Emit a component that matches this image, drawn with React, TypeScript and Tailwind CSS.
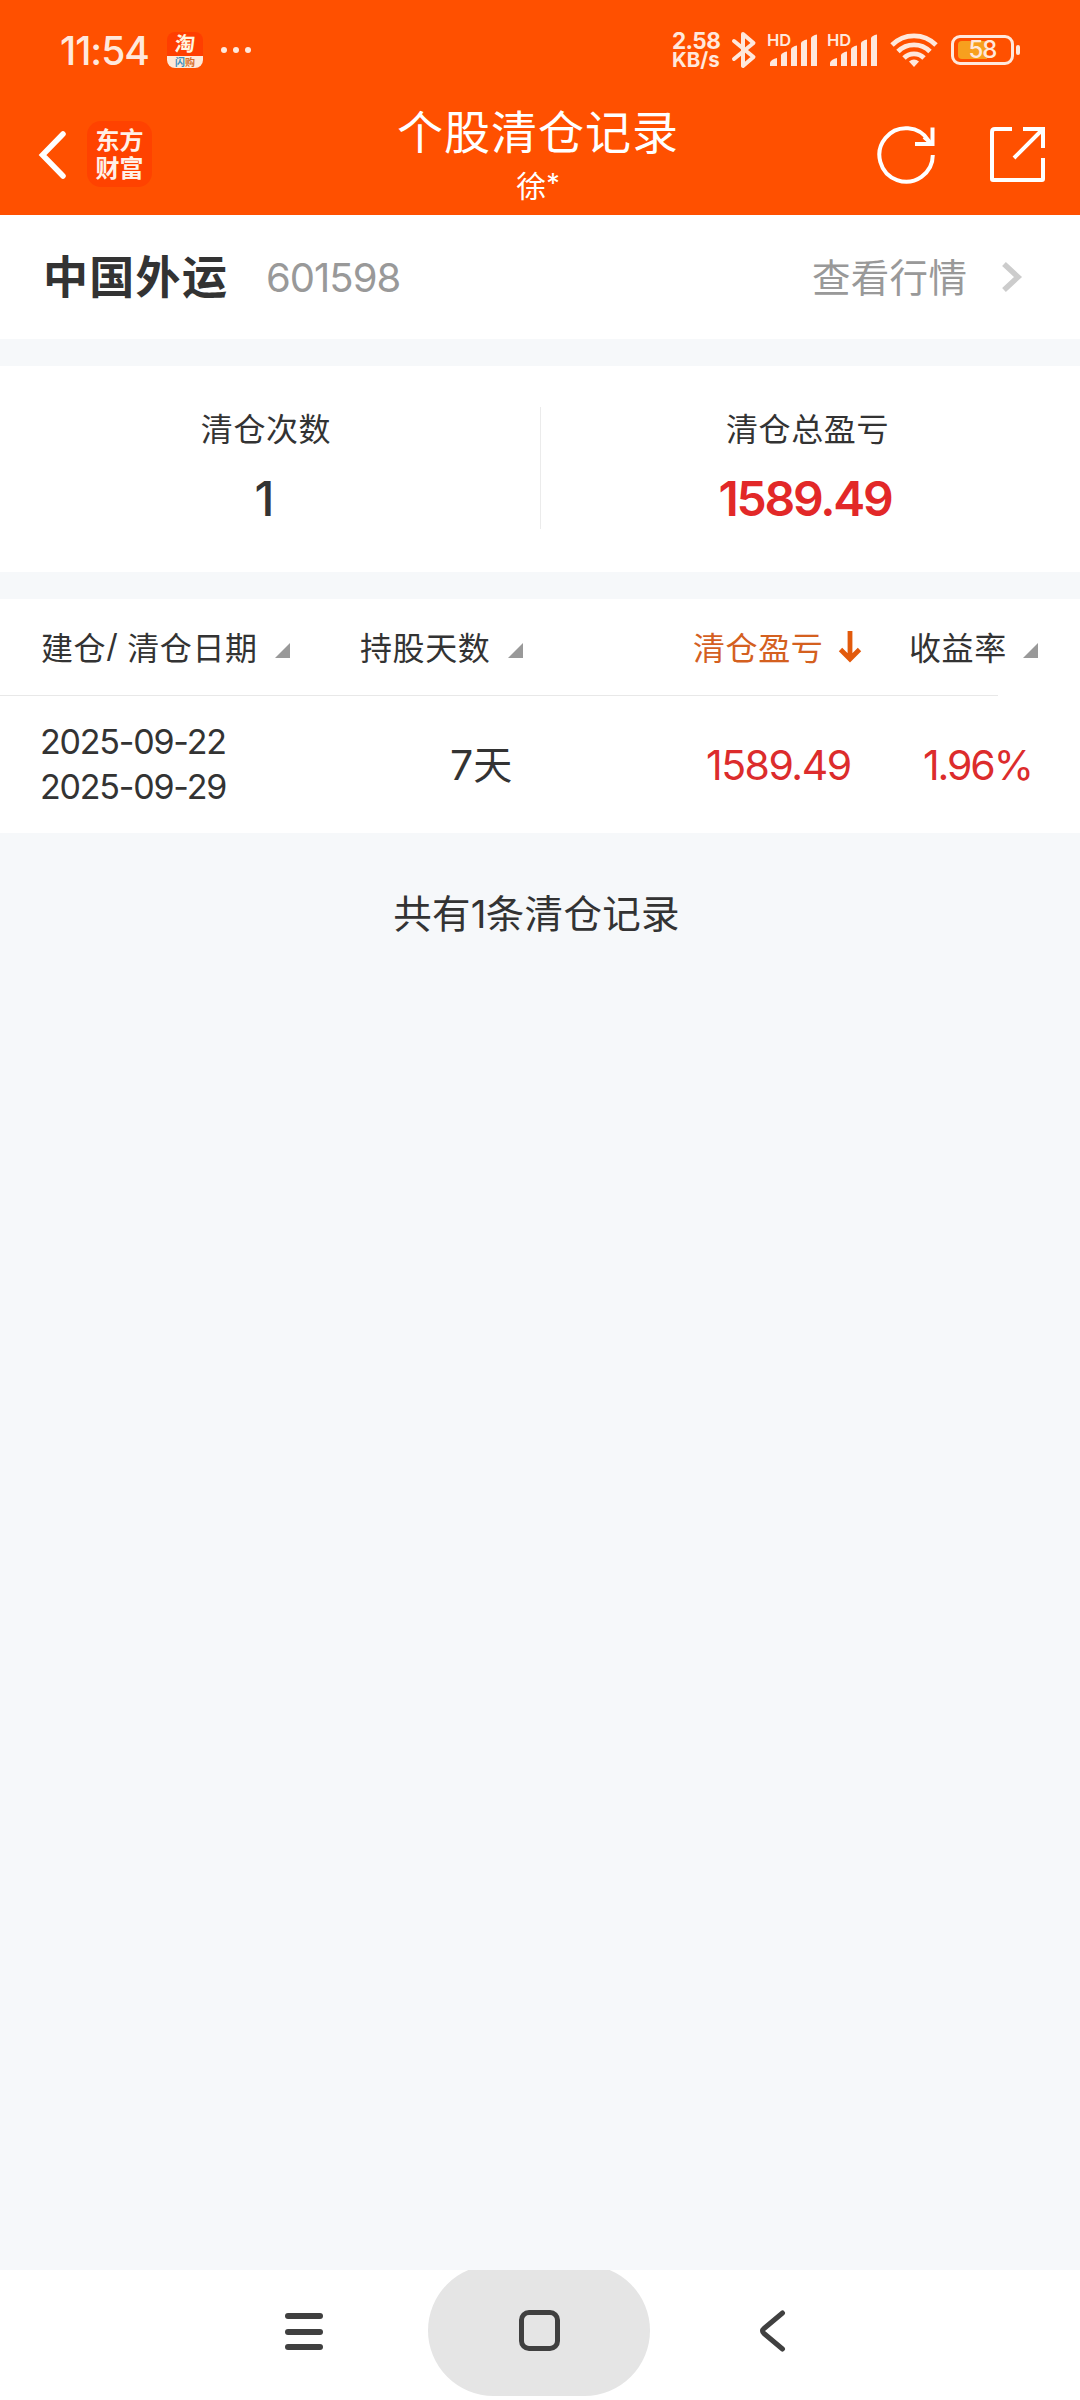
import React from "react";

const CJK = "font-['Noto_Sans_CJK_SC',sans-serif]";
const LATIN = "font-['Inter',sans-serif]";

function Signal() {
  return (
    <svg width="52" height="34" viewBox="0 0 52 34" className="block overflow-visible" fill="#ffe8dc">
      <text x="-1" y="13" fontSize="16.5" fontWeight="600" fontFamily="Inter, sans-serif">HD</text>
      <path d="M2 33v-3.500q1.500-3.500 7-4.500v8z" />
      <path d="M13 33V22q1-2.500 6-3.500V33z" />
      <path d="M23 33V16q1-2.500 6-3.500V33z" />
      <path d="M33 33V10q1-2.500 6-3.500V33z" />
      <path d="M43 33V5q1-2.500 6-3.500V33z" />
    </svg>
  );
}

function StatusBar() {
  return (
    <div className="flex h-[100px] items-center pl-[60px] text-[#ffe8dc]">
      <span className={`${LATIN} w-[107px] whitespace-nowrap text-[39px] leading-none font-medium tracking-[-1px]`}>11:54</span>
      <div className="flex h-9 w-9 flex-col rounded-[8px] bg-[#ff3e00]">
        <div className={`${CJK} flex h-6 items-center justify-center text-[20px] leading-[24px] font-bold text-[#fff6e0]`}>
          <span className="-mt-[2px] -skew-x-6">淘</span>
        </div>
        <div className={`${CJK} flex h-3 justify-center rounded-b-[8px] bg-[#ffe9d8] text-[10px] leading-[11px] font-bold text-[#d8702c]`}>
          <span className="text-[#3c8fc0]">闪</span>
          <span>购</span>
        </div>
      </div>
      <div className="ml-[18px] flex gap-[6px]">
        <i className="h-[6px] w-[6px] rounded-full bg-current" />
        <i className="h-[6px] w-[6px] rounded-full bg-current" />
        <i className="h-[6px] w-[6px] rounded-full bg-current" />
      </div>
      <div className={`${LATIN} ml-[421px] w-[59px] font-bold`}>
        <div className="text-[22.500px] leading-[19px] tracking-[-0.600px]">2.58</div>
        <div className="text-[20.500px] leading-[19px]">KB/s</div>
      </div>
      <svg width="26" height="40" viewBox="0 0 26 40" className="block" fill="none" stroke="#ffe8dc" strokeWidth="4" strokeLinejoin="round" strokeLinecap="round">
        <path d="M3 11 22.500 27 12 36V4l10.500 9L3 29" />
      </svg>
      <div className="ml-[11px] flex gap-2">
        <Signal />
        <Signal />
      </div>
      <svg width="48" height="36" viewBox="0 0 48 36" className="ml-[10px] block" fill="none" stroke="#ffe8dc" strokeWidth="4.800">
        <path d="M2 13a31 31 0 0 1 44 0" />
        <path d="M8 19.500a22.500 22.500 0 0 1 32 0" />
        <path d="M14 26a14 14 0 0 1 20 0" />
        <path d="M24 35l-5-5.500q5-3.800 10 0z" fill="#ffe8dc" stroke="none" />
      </svg>
      <div className="ml-[13px] flex h-[30px] w-[63px] items-center rounded-[9px] border-[3px] border-[#ffe8dc] p-1">
        <div className="relative h-[18px] w-full">
          <div className="h-full w-[29px] rounded-l-[4px] bg-[#f7a01e]" />
          <span className={`${LATIN} absolute inset-0 text-center text-[24px] leading-[18px] font-medium tracking-[-1px]`}>58</span>
        </div>
      </div>
      <div className="ml-[2px] h-[10px] w-[4px] rounded-[2px] bg-[#ffe8dc]" />
    </div>
  );
}

function TitleBar() {
  return (
    <div className={`${CJK} flex h-[115px] text-white`}>
      <div className="flex w-[358px] items-start pl-[38px]">
        <svg width="30" height="50" viewBox="0 0 30 50" className="mt-[30px] block" fill="none" stroke="#fff" strokeWidth="5.500" strokeLinecap="round" strokeLinejoin="miter">
          <path d="M25 4 4.500 25 25 46" />
        </svg>
        <div className="mt-[21px] ml-[19px] flex h-[66px] w-[65px] flex-col items-center rounded-[14px] bg-[#ff4200] pt-[4px] text-[24px] leading-[28px] font-bold text-[#fff0e8]">
          <span className="h-7">东方</span>
          <span className="h-7">财富</span>
        </div>
      </div>
      <div className="flex w-[360px] flex-col items-center">
        <div className="mt-[4px] h-[54px] text-[46px] leading-[50px] tracking-[1px]">个股清仓记录</div>
        <div className="flex h-[52px] text-[30px] leading-[52px]">
          徐<span className={`${LATIN} text-[27px] leading-[52px]`}>*</span>
        </div>
      </div>
      <svg width="60" height="60" viewBox="0 0 60 60" className="mt-[25px] ml-[158px] block" fill="none" stroke="#fff" strokeWidth="4">
        <path d="M56.800 30A26.700 26.700 0 1 1 53 16.200" />
        <path d="M39 19h17.500V2.500" />
        <path d="M48 12l8 7" />
      </svg>
      <svg width="60" height="60" viewBox="0 0 60 60" className="mt-[25px] ml-[52px] block" fill="none" stroke="#fff" strokeWidth="4">
        <path d="M24 4H7q-3 0-3 3v47q0 1 1 1h49q1 0 1-1V33" />
        <path d="M35 4h20v19M54 5 26 33" />
      </svg>
    </div>
  );
}

function SortMark({ className }: { className: string }) {
  return (
    <svg width="15" height="15" viewBox="0 0 15 15" className={`block ${className}`}>
      <path d="M15 0v15H0z" fill="#999" />
    </svg>
  );
}

function StockRow() {
  return (
    <div className="flex h-[124px] items-center pl-[43px]">
      <span className={`${CJK} -mt-[4px] w-[223px] text-[45px] leading-[50px] font-bold tracking-[1.300px]`}>中国外运</span>
      <span className={`${LATIN} mt-[2px] w-[546px] text-[40px] leading-[50px] tracking-[-1px] text-[#999]`}>601598</span>
      <span className={`${CJK} -mt-[5px] w-[189px] text-[38.500px] leading-[50px] tracking-[0.300px] text-[#999]`}>查看行情</span>
      <svg width="22" height="32" viewBox="0 0 22 32" className="block" fill="none" stroke="#ccc" strokeWidth="5.500">
        <path d="M3 3l14 13L3 29" />
      </svg>
    </div>
  );
}

function Stats() {
  return (
    <div className="flex h-[206px] pt-[41px]">
      <div className="flex w-[540px] flex-col items-center pr-[8px]">
        <div className={`${CJK} h-[42px] text-[32px] leading-[40px] tracking-[0.600px]`}>清仓次数</div>
        <div className={`${LATIN} mt-[22px] -ml-[3px] text-[48px] leading-[56px] font-medium`}>1</div>
      </div>
      <div className="h-[122px] w-px bg-[#ebebeb]" />
      <div className="flex w-[533px] flex-col items-center">
        <div className={`${CJK} h-[42px] text-[32px] leading-[40px] tracking-[0.600px]`}>清仓总盈亏</div>
        <div className={`${LATIN} mt-[22px] -ml-[5px] text-[48px] leading-[56px] font-semibold tracking-[-2.200px] text-[#e22828]`}>1589.49</div>
      </div>
    </div>
  );
}

function Records() {
  return (
    <div className="h-[234px]">
      <div className={`${CJK} flex h-[96px] items-center pl-[41px] text-[32px] leading-[42px] whitespace-nowrap`}>
        <span className="-mt-[3px] flex w-[234px] tracking-[0.600px]">
          建仓<span className={`${LATIN} w-[21px]`}>/</span>清仓日期
        </span>
        <SortMark className="mt-[7px]" />
        <span className="-mt-[3px] ml-[70px] w-[148px] tracking-[0.600px]">持股天数</span>
        <SortMark className="mt-[7px]" />
        <span className="-mt-[3px] ml-[170px] w-[145px] tracking-[0.600px] text-[#d4601f]">清仓盈亏</span>
        <svg width="24" height="32" viewBox="0 0 24 32" className="block" fill="none" stroke="#e25a0c" strokeWidth="4.800">
          <path d="M12 0v28M2.500 18.500 12 28l9.500-9.500" />
        </svg>
        <span className="-mt-[3px] ml-[47px] w-[114px] tracking-[0.600px]">收益率</span>
        <SortMark className="mt-[7px]" />
      </div>
      <div className="h-px w-[998px] bg-[#e8e8e8]" />
      <div className={`${LATIN} flex h-[137px] items-center text-[41px]`}>
        <div className="-mt-[2px] w-[450px] pl-[40px] text-[34px] leading-[45px] tracking-[-1.200px]">
          <div>2025-09-22</div>
          <div>2025-09-29</div>
        </div>
        <div className="flex w-[256px] leading-[50px]">
          7<span className={`${CJK} -mt-[3px] text-[39px]`}>天</span>
        </div>
        <div className="w-[217px] leading-[50px] tracking-[-1.500px] text-[#dc2c2c]">1589.49</div>
        <div className="leading-[50px] tracking-[-2.100px] text-[#dc2c2c]">1.96%</div>
      </div>
    </div>
  );
}

function NavBar() {
  return (
    <div className="flex h-[130px] items-start overflow-hidden bg-white">
      <div className="mt-[43px] ml-[285px] flex w-[143px] flex-col gap-[9.500px]">
        <i className="h-[6px] w-[38px] rounded-full bg-[#404040]" />
        <i className="h-[6px] w-[38px] rounded-full bg-[#404040]" />
        <i className="h-[6px] w-[38px] rounded-full bg-[#404040]" />
      </div>
      <div className="-mt-[5px] flex h-[131px] w-[222px] items-center justify-center rounded-full bg-[#e5e5e5]">
        <div className="h-[41px] w-[41px] rounded-[10px] border-[5px] border-[#404040]" />
      </div>
      <svg width="30" height="46" viewBox="0 0 30 46" className="mt-[38px] ml-[108px] block" fill="none" stroke="#404040" strokeWidth="5" strokeLinecap="round">
        <path d="M24.500 5 6 20.500q-3 2.500 0 5L24.500 41" />
      </svg>
    </div>
  );
}

export default function App() {
  return (
    <div className="flex h-[2400px] w-[1080px] flex-col overflow-hidden bg-[#f6f8fa] text-[#333]">
      <header className="h-[215px] bg-[#ff5000]">
        <StatusBar />
        <TitleBar />
      </header>
      <section className="bg-white">
        <StockRow />
      </section>
      <section className="mt-[27px] bg-white">
        <Stats />
      </section>
      <section className="mt-[27px] bg-white">
        <Records />
      </section>
      <div className={`${CJK} mt-[53px] flex justify-center pr-[7px] text-[38.500px] leading-[50px] tracking-[0.300px]`}>
        共有<span className={`${LATIN} mt-[3px] w-[15px] tracking-[-2px]`}>1</span>条清仓记录
      </div>
      <div className="mt-auto">
        <NavBar />
      </div>
    </div>
  );
}
